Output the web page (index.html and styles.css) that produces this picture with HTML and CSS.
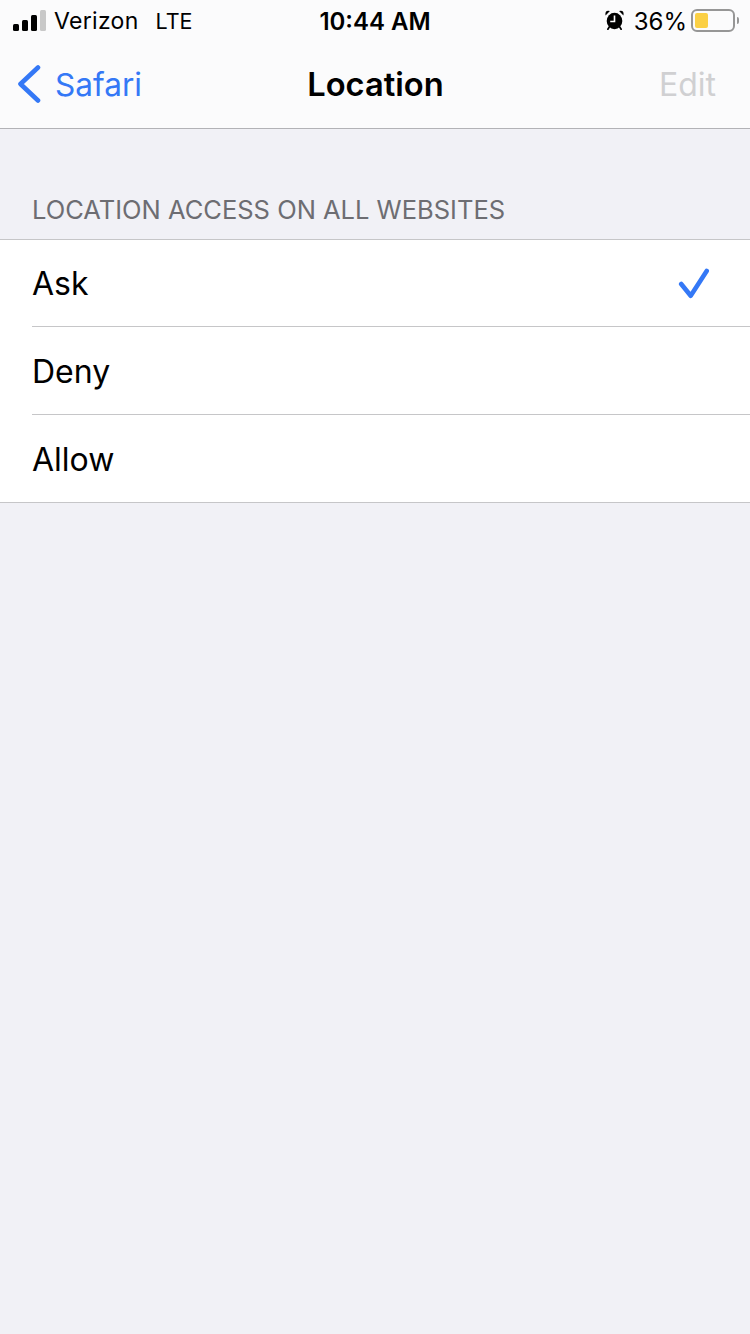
FILE: index.html
```html
<!DOCTYPE html>
<html lang="en">
<head>
  <meta charset="UTF-8" />
  <meta name="viewport" content="width=device-width, initial-scale=1.0" />
  <title>Location</title>
  <link rel="stylesheet" href="styles.css">
</head>
<body>
  <header class="top">
    <div class="status">
      <div class="status-left">
        <div class="signal">
          <span class="bar bar1"></span>
          <span class="bar bar2"></span>
          <span class="bar bar3"></span>
          <span class="bar bar4"></span>
        </div>
        <span class="carrier">Verizon</span>
        <span class="network">LTE</span>
      </div>
      <div class="clock">10:44 AM</div>
      <div class="status-right">
        <svg class="alarm" width="19" height="20" viewBox="0 0 20 20" preserveAspectRatio="none">
          <circle cx="10" cy="11" r="8.200" fill="#000"/>
          <path d="M.6 5.500 L5.200 1 Q2 .2 .8 2 Q.1 3.800 .6 5.500Z" fill="#000"/>
          <path d="M19.400 5.500 L14.800 1 Q18 .2 19.200 2 Q19.900 3.800 19.400 5.500Z" fill="#000"/>
          <path d="M10 5.500 V11.500 H5.500" fill="none" stroke="#fff" stroke-width="1.700"/>
          <path d="M4.500 17 L3 19.200 M15.500 17 L17 19.200" stroke="#000" stroke-width="1.800" stroke-linecap="round"/>
        </svg>
        <span class="percent">36%</span>
        <div class="battery">
          <div class="battery-fill"></div>
        </div>
        <div class="battery-cap"></div>
      </div>
    </div>
    <nav class="nav">
      <a class="back">
        <svg width="24" height="38" viewBox="0 0 24 38">
          <path d="M21 2.500 L3.500 19 L21 35.500" fill="none" stroke="#3478f6" stroke-width="4.600" stroke-linecap="round" stroke-linejoin="round"/>
        </svg>
        <span>Safari</span>
      </a>
      <h1 class="title">Location</h1>
      <span class="edit">Edit</span>
    </nav>
  </header>

  <h2 class="section">LOCATION ACCESS ON ALL WEBSITES</h2>
  <ul class="list">
    <li class="row">
      <span>Ask</span>
      <svg class="check" width="32" height="32" viewBox="0 0 32 32">
        <path d="M3.200 17 L12.700 28.800 L28.700 4" fill="none" stroke="#3478f6" stroke-width="4.600" stroke-linecap="round" stroke-linejoin="round"/>
      </svg>
    </li>
    <li class="row"><span>Deny</span></li>
    <li class="row"><span>Allow</span></li>
  </ul>
</body>
</html>
```

FILE: styles.css
```css
* {
  margin: 0;
  padding: 0;
  box-sizing: border-box;
  font-family: Inter, "Liberation Sans", sans-serif;
}

body {
  background-color: #f1f1f6;
  color: #000;
  min-height: 1334px;
}

.top {
  background-color: #fbfbfc;
  height: 129px;
  border-bottom: 1px solid #b2b2b6;
}

.status {
  height: 40px;
  position: relative;
  display: flex;
  justify-content: space-between;
  align-items: center;
  padding: 0 11px 0 13px;
  font-size: 23px;
}

.status-left {
  display: flex;
  align-items: center;
}

.signal {
  display: flex;
  align-items: flex-end;
  gap: 3px;
  height: 21px;
  margin-right: 8px;
}

.bar {
  width: 6px;
  background-color: #000;
  border-radius: 1.500px;
}

.bar1 { height: 7px; }
.bar2 { height: 11px; }
.bar3 { height: 16px; }
.bar4 { height: 21px; background-color: #c8c8c8; }

.carrier {
  padding-top: 2px;
  letter-spacing: 0.3px;
}

.network {
  margin-left: 17px;
  padding-top: 2px;
  font-size: 21.500px;
}

.clock {
  position: absolute;
  left: 0;
  right: 0;
  padding-top: 2px;
  text-align: center;
  font-size: 24px;
  font-weight: 600;
}

.status-right {
  display: flex;
  align-items: center;
  position: relative;
}

.alarm {
  margin-right: 10px;
}

.percent {
  margin-right: 4px;
  padding-top: 2px;
  font-size: 24px;
}

.battery {
  width: 44px;
  height: 23px;
  border: 2px solid #969696;
  border-radius: 6px;
  padding: 2px;
}

.battery-fill {
  width: 13px;
  height: 15px;
  background-color: #fbd045;
  border-radius: 2px;
}

.battery-cap {
  width: 2px;
  height: 7px;
  margin-left: 2px;
  background-color: #969696;
  border-radius: 0 2px 2px 0;
}

.nav {
  height: 88px;
  position: relative;
  display: flex;
  justify-content: space-between;
  align-items: center;
  padding: 0 34px 0 17px;
  font-size: 32px;
}

.back {
  display: flex;
  align-items: center;
  gap: 14px;
  color: #3478f6;
  font-size: 31.600px;
}

.title {
  position: absolute;
  left: 1px;
  right: 0;
  text-align: center;
  font-size: 32.700px;
  font-weight: 600;
}

.edit {
  color: #d0d0d2;
}

.section {
  padding: 66px 32px 14px;
  font-size: 25.500px;
  line-height: 30px;
  font-weight: 400;
  color: #6d6d72;
}

.list {
  list-style: none;
  background-color: #fff;
  border-top: 1px solid #c6c6c8;
  border-bottom: 1px solid #c6c6c8;
}

.row {
  height: 88px;
  display: flex;
  justify-content: space-between;
  align-items: center;
  margin-left: 32px;
  padding-top: 1px;
  padding-right: 40px;
  font-size: 32px;
  border-bottom: 1px solid #c6c6c8;
}

.row:first-child {
  height: 87px;
  padding-top: 0;
}

.row:last-child {
  height: 87px;
  border-bottom: none;
}
```
